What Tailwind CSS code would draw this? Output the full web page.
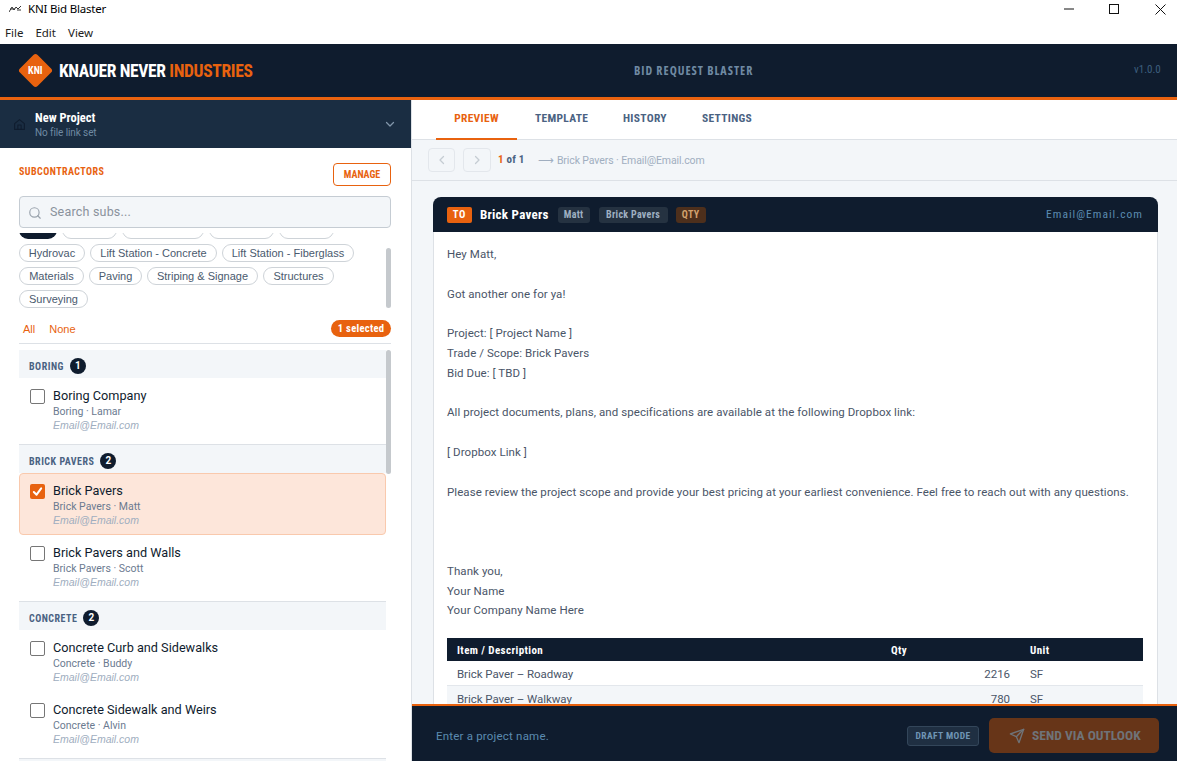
<!DOCTYPE html>
<html><head><meta charset="utf-8"><title>KNI Bid Blaster</title>
<script src="https://cdn.jsdelivr.net/npm/@tailwindcss/browser@4"></script></head>
<body class="m-0 bg-white overflow-hidden">
<div class="w-[1177px] h-[761px] flex flex-col overflow-hidden font-['Roboto',sans-serif] text-[#0f1c2e]">
  <div class="h-[22px] flex items-center shrink-0 bg-white pb-[4px] font-['Noto_Sans',sans-serif] text-[11.5px] tracking-[-0.2px] text-black">
    <svg class="ml-[9px] mr-[6px] w-[13px] h-[8px]" viewBox="0 0 13 8" fill="none" stroke="#333" stroke-width="1"><path d="M0 7l3-5 2 3 2-3 2 2 3-3M1 4h5M8 5h4"/></svg>
    <span>KNI Bid Blaster</span>
    <div class="ml-auto flex items-center">
      <svg class="w-[10px] h-[10px] mr-[35px]" viewBox="0 0 10 10"><path d="M0 5h10" stroke="#111" stroke-width="1"/></svg>
      <svg class="w-[10px] h-[10px] mr-[36px]" viewBox="0 0 10 10"><rect x=".5" y=".5" width="9" height="9" fill="none" stroke="#111"/></svg>
      <svg class="w-[11px] h-[11px] mr-[11px]" viewBox="0 0 11 11"><path d="M.5.5l10 10M10.5.5l-10 10" stroke="#111"/></svg>
    </div>
  </div>
  <div class="h-[22px] flex items-center gap-[12px] pl-[5px] shrink-0 font-['Noto_Sans',sans-serif] text-[11.5px] text-[#222]"><span>File</span><span>Edit</span><span>View</span></div>
  <header class="h-[56px] shrink-0 bg-[#0f1c2e] border-b-[3px] border-[#e8620f] flex items-center relative">
    <div class="ml-[23px] w-[25px] h-[25px] rotate-45 rounded-[3px] bg-[#e8620f] flex items-center justify-center shrink-0"><span class="-rotate-45 text-white text-[10px] font-bold font-['Roboto_Condensed','Roboto',sans-serif] [font-stretch:75%]">KNI</span></div>
    <div class="ml-[11px] mt-[2px] text-[17.5px] font-bold tracking-[-0.35px] text-white font-['Roboto_Condensed','Roboto',sans-serif] [font-stretch:75%] whitespace-nowrap">KNAUER NEVER <span class="text-[#e8620f]">INDUSTRIES</span></div>
    <div class="absolute left-[634px] top-[18px] text-[12px] font-bold tracking-[1px] text-[#6f8aa3] font-['Open_Sans',sans-serif] [font-stretch:75%] whitespace-nowrap">BID REQUEST BLASTER</div>
    <div class="ml-auto mr-[18px] w-[25px] whitespace-nowrap text-[11px] text-[#3d5f7e] font-['Roboto_Condensed','Roboto',sans-serif] [font-stretch:75%]">v1.0.0</div>
  </header>
  <div class="flex flex-1 min-h-0">
    <aside class="w-[412px] shrink-0 border-r border-[#dde1e6] flex flex-col min-h-0 bg-white">
      <div class="h-[48px] shrink-0 bg-[#1a2d42] flex items-center">
        <svg class="ml-[13px] w-[13px] h-[13px]" viewBox="0 0 24 24" fill="none" stroke="#0f1c2e" stroke-width="2" stroke-linecap="round" stroke-linejoin="round"><path d="M3 10.5 12 3l9 7.5V21H3z"/><path d="M9 21v-8h6v8"/></svg>
        <div class="ml-[9px] mt-[2px] flex flex-col">
          <span class="text-[12.5px] leading-[15px] font-bold text-white font-['Roboto_Condensed','Roboto',sans-serif] [font-stretch:75%]">New Project</span>
          <span class="text-[10px] leading-[15px] text-[#6f8aa3] tracking-[-0.1px]">No file link set</span>
        </div>
        <svg class="ml-auto mr-[15px] w-[12px] h-[12px]" viewBox="0 0 24 24" fill="none" stroke="#8296aa" stroke-width="2.5" stroke-linecap="round" stroke-linejoin="round"><path d="m5 9 7 7 7-7"/></svg>
      </div>
      <div class="h-[48px] shrink-0 flex items-start justify-between pl-[19px] pr-[20px] pt-[15px]">
        <span class="text-[10px] leading-[16px] mt-[1px] font-bold tracking-[0.45px] text-[#e8620f] font-['Roboto_Condensed','Roboto',sans-serif] [font-stretch:75%]">SUBCONTRACTORS</span>
        <button class="w-[58px] h-[23px] border border-[#e8620f] rounded-[4px] text-[10px] font-bold text-[#e8620f] font-['Roboto_Condensed','Roboto',sans-serif] [font-stretch:75%]">MANAGE</button>
      </div>
      <div class="mr-[20px] ml-[19px] h-[32px] shrink-0 rounded-[4px] border border-[#c5ccd3] bg-[#f3f6f9] flex items-center pt-[1px]">
        <svg class="ml-[8px] w-[14px] h-[14px]" viewBox="0 0 24 24" fill="none" stroke="#9aa3ad" stroke-width="2" stroke-linecap="round"><circle cx="11" cy="11" r="8"/><path d="m21 21-4.3-4.3"/></svg>
        <span class="ml-[8px] text-[12.5px] text-[#8a929c] tracking-[0.2px]">Search subs...</span>
      </div>
      <div class="relative h-[80px] mt-[5px] shrink-0 overflow-hidden pl-[19px] pr-[26px] font-['Liberation_Sans',sans-serif] text-[11px] text-[#4a5a6e]">
        <div class="flex flex-wrap gap-[5px] -mt-[12px]">
          <span class="h-[18px] w-[38px] rounded-full bg-[#0f1c2e]"></span>
          <span class="h-[18px] w-[55px] rounded-full border border-[#ced3d8]"></span>
          <span class="h-[18px] w-[82px] rounded-full border border-[#ced3d8]"></span>
          <span class="h-[18px] w-[65px] rounded-full border border-[#ced3d8]"></span>
          <span class="h-[18px] w-[55px] rounded-full border border-[#ced3d8]"></span>
          <span class="h-[18px] w-[66px] text-center rounded-full border border-[#ced3d8] leading-[16px] whitespace-nowrap">Hydrovac</span>
          <span class="h-[18px] w-[127px] text-center rounded-full border border-[#ced3d8] leading-[16px] whitespace-nowrap">Lift Station - Concrete</span>
          <span class="h-[18px] w-[132px] text-center rounded-full border border-[#ced3d8] leading-[16px] whitespace-nowrap">Lift Station - Fiberglass</span>
          <span class="h-[18px] w-[65px] text-center rounded-full border border-[#ced3d8] leading-[16px] whitespace-nowrap">Materials</span>
          <span class="h-[18px] w-[53px] text-center rounded-full border border-[#ced3d8] leading-[16px] whitespace-nowrap">Paving</span>
          <span class="h-[18px] w-[111px] text-center rounded-full border border-[#ced3d8] leading-[16px] whitespace-nowrap">Striping &amp; Signage</span>
          <span class="h-[18px] w-[71px] text-center rounded-full border border-[#ced3d8] leading-[16px] whitespace-nowrap">Structures</span>
          <span class="h-[18px] w-[69px] text-center rounded-full border border-[#ced3d8] leading-[16px] whitespace-nowrap">Surveying</span>
        </div>
        <div class="absolute left-[386px] top-[15px] w-[5px] h-[60px] rounded-full bg-[#c5c9cd]"></div>
      </div>
      <div class="h-[31px] shrink-0 mr-[20px] ml-[19px] pl-[4px] border-b border-[#dde1e6] flex items-start pt-[7px] font-['Liberation_Sans',sans-serif] text-[11px] text-[#e8620f]">
        <span class="leading-[17px] mt-[1px]">All</span><span class="ml-[14px] mt-[1px] leading-[17px]">None</span>
        <span class="ml-auto h-[17px] w-[60px] rounded-full bg-[#e8620f] text-white text-center text-[10.5px] leading-[17px] font-bold font-['Roboto_Condensed','Roboto',sans-serif] [font-stretch:75%] tracking-[0.3px]">1 selected</span>
      </div>
      <div class="relative flex-1 min-h-0 mt-[6px] overflow-hidden ml-[19px]">
        <div class="w-[367px]">
          <div class="h-[28px] bg-[#f3f6f9] flex items-center pl-[10px] pt-[4px] gap-[6px]"><span class="text-[10px] font-bold tracking-[0.5px] text-[#4a6282] font-['Roboto_Condensed','Roboto',sans-serif] [font-stretch:75%]">BORING</span><span class="w-[16px] h-[16px] rounded-full bg-[#0f1c2e] text-white text-[10px] font-bold text-center leading-[16px]">1</span></div>
          <div class="h-[66px] pl-[11px] pt-[10px] flex gap-[8px]">
            <span class="w-[15px] h-[15px] mt-[1px] rounded-[2px] border border-[#767676] shrink-0 bg-white"></span>
            <div class="-mt-[1px]"><div class="text-[12.7px] leading-[18px] text-[#0f1c2e]">Boring Company</div><div class="text-[10.5px] leading-[14px] text-[#6b7a90]">Boring · Lamar</div><div class="text-[10.5px] leading-[13px] italic text-[#a0aec0] font-['Liberation_Sans',sans-serif]">Email@Email.com</div></div>
          </div>
          <div class="h-[29px] bg-[#f3f6f9] border-t border-[#dde1e6] flex items-center pl-[10px] pt-[4px] gap-[6px]"><span class="text-[10px] font-bold tracking-[0.5px] text-[#4a6282] font-['Roboto_Condensed','Roboto',sans-serif] [font-stretch:75%]">BRICK PAVERS</span><span class="w-[16px] h-[16px] rounded-full bg-[#0f1c2e] text-white text-[10px] font-bold text-center leading-[16px]">2</span></div>
          <div class="h-[62px] pl-[10px] pt-[9px] flex gap-[8px] bg-[#fde6da] border border-[#f9c9ad] rounded-[4px]">
            <span class="w-[15px] h-[15px] mt-[1px] rounded-[2px] bg-[#e8620f] shrink-0 flex items-center justify-center"><svg class="w-[11px] h-[11px]" viewBox="0 0 12 12" fill="none" stroke="#fff" stroke-width="2.2" stroke-linecap="round" stroke-linejoin="round"><path d="M2 6.5 5 9.5 10 2.5"/></svg></span>
            <div class="-mt-[1px]"><div class="text-[12.7px] leading-[18px] text-[#0f1c2e]">Brick Pavers</div><div class="text-[10.5px] leading-[14px] text-[#6b7a90]">Brick Pavers · Matt</div><div class="text-[10.5px] leading-[13px] italic text-[#a0aec0] font-['Liberation_Sans',sans-serif]">Email@Email.com</div></div>
          </div>
          <div class="h-[66px] pl-[11px] pt-[10px] flex gap-[8px]">
            <span class="w-[15px] h-[15px] mt-[1px] rounded-[2px] border border-[#767676] shrink-0 bg-white"></span>
            <div class="-mt-[1px]"><div class="text-[12.7px] leading-[18px] text-[#0f1c2e]">Brick Pavers and Walls</div><div class="text-[10.5px] leading-[14px] text-[#6b7a90]">Brick Pavers · Scott</div><div class="text-[10.5px] leading-[13px] italic text-[#a0aec0] font-['Liberation_Sans',sans-serif]">Email@Email.com</div></div>
          </div>
          <div class="h-[29px] bg-[#f3f6f9] border-t border-[#dde1e6] flex items-center pl-[10px] pt-[4px] gap-[6px]"><span class="text-[10px] font-bold tracking-[0.5px] text-[#4a6282] font-['Roboto_Condensed','Roboto',sans-serif] [font-stretch:75%]">CONCRETE</span><span class="w-[16px] h-[16px] rounded-full bg-[#0f1c2e] text-white text-[10px] font-bold text-center leading-[16px]">2</span></div>
          <div class="h-[62px] pl-[11px] pt-[10px] flex gap-[8px]">
            <span class="w-[15px] h-[15px] mt-[1px] rounded-[2px] border border-[#767676] shrink-0 bg-white"></span>
            <div class="-mt-[1px]"><div class="text-[12.7px] leading-[18px] text-[#0f1c2e]">Concrete Curb and Sidewalks</div><div class="text-[10.5px] leading-[14px] text-[#6b7a90]">Concrete · Buddy</div><div class="text-[10.5px] leading-[13px] italic text-[#a0aec0] font-['Liberation_Sans',sans-serif]">Email@Email.com</div></div>
          </div>
          <div class="h-[66px] pl-[11px] pt-[10px] flex gap-[8px]">
            <span class="w-[15px] h-[15px] mt-[1px] rounded-[2px] border border-[#767676] shrink-0 bg-white"></span>
            <div class="-mt-[1px]"><div class="text-[12.7px] leading-[18px] text-[#0f1c2e]">Concrete Sidewalk and Weirs</div><div class="text-[10.5px] leading-[14px] text-[#6b7a90]">Concrete · Alvin</div><div class="text-[10.5px] leading-[13px] italic text-[#a0aec0] font-['Liberation_Sans',sans-serif]">Email@Email.com</div></div>
          </div>
          <div class="h-[29px] bg-[#f3f6f9] border-t border-[#dde1e6]"></div>
        </div>
        <div class="absolute left-[367px] top-0 w-[5px] h-[124px] rounded-full bg-[#c5c9cd]"></div>
      </div>
    </aside>
    <main class="flex-1 min-w-0 flex flex-col min-h-0 bg-[#f3f6f9]">
      <nav class="h-[40px] shrink-0 bg-white border-b border-[#dde1e6] flex pl-[24px] font-['Roboto_Condensed','Roboto',sans-serif] [font-stretch:75%] text-[11.5px] font-bold tracking-[0.3px] text-[#4a6282]">
        <span class="w-[81px] h-[40px] border-b-[2px] border-[#e8620f] text-[#e8620f] text-center leading-[37px]">PREVIEW</span>
        <span class="ml-[18px] w-[52px] leading-[37px] whitespace-nowrap">TEMPLATE</span>
        <span class="ml-[36px] w-[43px] leading-[37px] whitespace-nowrap">HISTORY</span>
        <span class="ml-[36px] w-[50px] leading-[37px] whitespace-nowrap">SETTINGS</span>
      </nav>
      <div class="h-[41px] shrink-0 border-b border-[#dde1e6] flex items-center pl-[16px] pb-[1px]">
        <span class="w-[27px] h-[24px] rounded-[4px] border border-[#e3e7ec] flex items-center justify-center"><svg class="w-[12px] h-[12px]" viewBox="0 0 24 24" fill="none" stroke="#c5ccd3" stroke-width="2.5" stroke-linecap="round" stroke-linejoin="round"><path d="m15 5-7 7 7 7"/></svg></span>
        <span class="ml-[8px] w-[28px] h-[24px] rounded-[4px] border border-[#e3e7ec] flex items-center justify-center"><svg class="w-[12px] h-[12px]" viewBox="0 0 24 24" fill="none" stroke="#c5ccd3" stroke-width="2.5" stroke-linecap="round" stroke-linejoin="round"><path d="m9 5 7 7-7 7"/></svg></span>
        <span class="ml-[7px] mt-[2px] text-[11px] font-bold tracking-[0.2px] text-[#4a6282] font-['Roboto_Condensed','Roboto',sans-serif] [font-stretch:75%]"><span class="text-[#e8620f]">1</span> of 1</span>
        <span class="ml-[14px] mt-[2px] text-[10.5px] tracking-[-0.1px] text-[#a0aec0]">⟶ Brick Pavers · Email@Email.com</span>
      </div>
      <div class="flex-1 min-h-0 overflow-hidden pt-[16px] pl-[21px] pr-[19px]">
        <div class="rounded-t-[8px] border border-[#dde1e6] border-t-0 bg-white">
          <div class="h-[35px] rounded-t-[8px] bg-[#0f1c2e] flex items-center pl-[14px] pr-[15px] pt-[1px] -mx-[1px] font-['Roboto_Condensed','Roboto',sans-serif] [font-stretch:75%] font-bold">
            <span class="w-[25px] h-[16px] rounded-[2px] bg-[#e8620f] text-white text-[10.5px] leading-[16px] text-center tracking-[0.8px]">TO</span>
            <span class="ml-[8px] text-[13px] text-white tracking-[0.25px]">Brick Pavers</span>
            <span class="ml-[9px] h-[16px] w-[32px] rounded-[3px] bg-[#253241] text-[#9fb0c2] text-[10px] leading-[16px] text-center tracking-[0.3px] whitespace-nowrap">Matt</span>
            <span class="ml-[9px] h-[16px] w-[69px] rounded-[3px] bg-[#253241] text-[#9fb0c2] text-[10px] leading-[16px] text-center tracking-[0.3px] whitespace-nowrap">Brick Pavers</span>
            <span class="ml-[8px] h-[16px] w-[30px] rounded-[3px] bg-[#4d2f1c] text-[#d3a26f] text-[10px] leading-[16px] text-center tracking-[0.3px]">QTY</span>
            <span class="ml-auto text-[11.5px] font-normal font-['Roboto',sans-serif] tracking-[1px] text-[#5b8bb0]">Email@Email.com</span>
          </div>
          <div class="pt-[13px] pl-[13px] pr-[14px] text-[11.5px] leading-[19.8px] tracking-[0.07px] text-[#4a5568] whitespace-pre-line">Hey Matt,

Got another one for ya!

Project: [ Project Name ]
Trade / Scope: Brick Pavers
Bid Due: [ TBD ]

All project documents, plans, and specifications are available at the following Dropbox link:

[ Dropbox Link ]

Please review the project scope and provide your best pricing at your earliest convenience. Feel free to reach out with any questions.



Thank you,
Your Name
Your Company Name Here</div>
          <div class="ml-[13px] mr-[14px] mt-[17px]">
            <div class="h-[23px] bg-[#0f1c2e] flex items-center pl-[10px] pt-[3px] text-white text-[11px] font-bold tracking-[0.4px] font-['Roboto_Condensed','Roboto',sans-serif] [font-stretch:75%]"><span class="w-[434px]">Item / Description</span><span class="w-[139px]">Qty</span><span>Unit</span></div>
            <div class="h-[25px] border-b border-[#e3e7ec] flex items-center pl-[10px] pt-[2px] text-[11.5px] tracking-[-0.05px] text-[#4a5568]"><span class="w-[434px]">Brick Paver – Roadway</span><span class="w-[119px] text-right">2216</span><span class="ml-[20px]">SF</span></div>
            <div class="h-[25px] bg-[#f3f6f9] flex items-center pl-[10px] pt-[2px] text-[11.5px] tracking-[-0.05px] text-[#4a5568]"><span class="w-[434px]">Brick Paver – Walkway</span><span class="w-[119px] text-right">780</span><span class="ml-[20px]">SF</span></div>
          </div>
        </div>
      </div>
      <footer class="h-[57px] shrink-0 bg-[#0f1c2e] border-t-[2px] border-[#e8620f] flex items-center pt-[4px] pl-[24px] pr-[18px]">
        <span class="text-[11.5px] tracking-[0.2px] text-[#5b8bb0] mt-[2px]">Enter a project name.</span>
        <span class="ml-auto w-[72px] h-[20px] rounded-[3px] border border-[#33465a] bg-[#1f2f42] text-center text-[9.5px] leading-[18px] font-bold tracking-[0.4px] text-[#6f95b5] font-['Roboto_Condensed','Roboto',sans-serif] [font-stretch:75%] whitespace-nowrap">DRAFT MODE</span>
        <span class="ml-[10px] w-[170px] h-[35px] rounded-[5px] bg-[#673518] flex items-center pl-[20px] gap-[7px]">
          <svg class="w-[16px] h-[16px]" viewBox="0 0 24 24" fill="none" stroke="#6f7378" stroke-width="2" stroke-linecap="round" stroke-linejoin="round"><path d="M22 2 11 13"/><path d="M22 2 15 22l-4-9-9-4z"/></svg>
          <span class="text-[13.5px] font-bold text-[#6f7378] font-['Roboto_Condensed','Roboto',sans-serif] [font-stretch:75%] whitespace-nowrap">SEND VIA OUTLOOK</span>
        </span>
      </footer>
    </main>
  </div>
</div>
</body></html>
